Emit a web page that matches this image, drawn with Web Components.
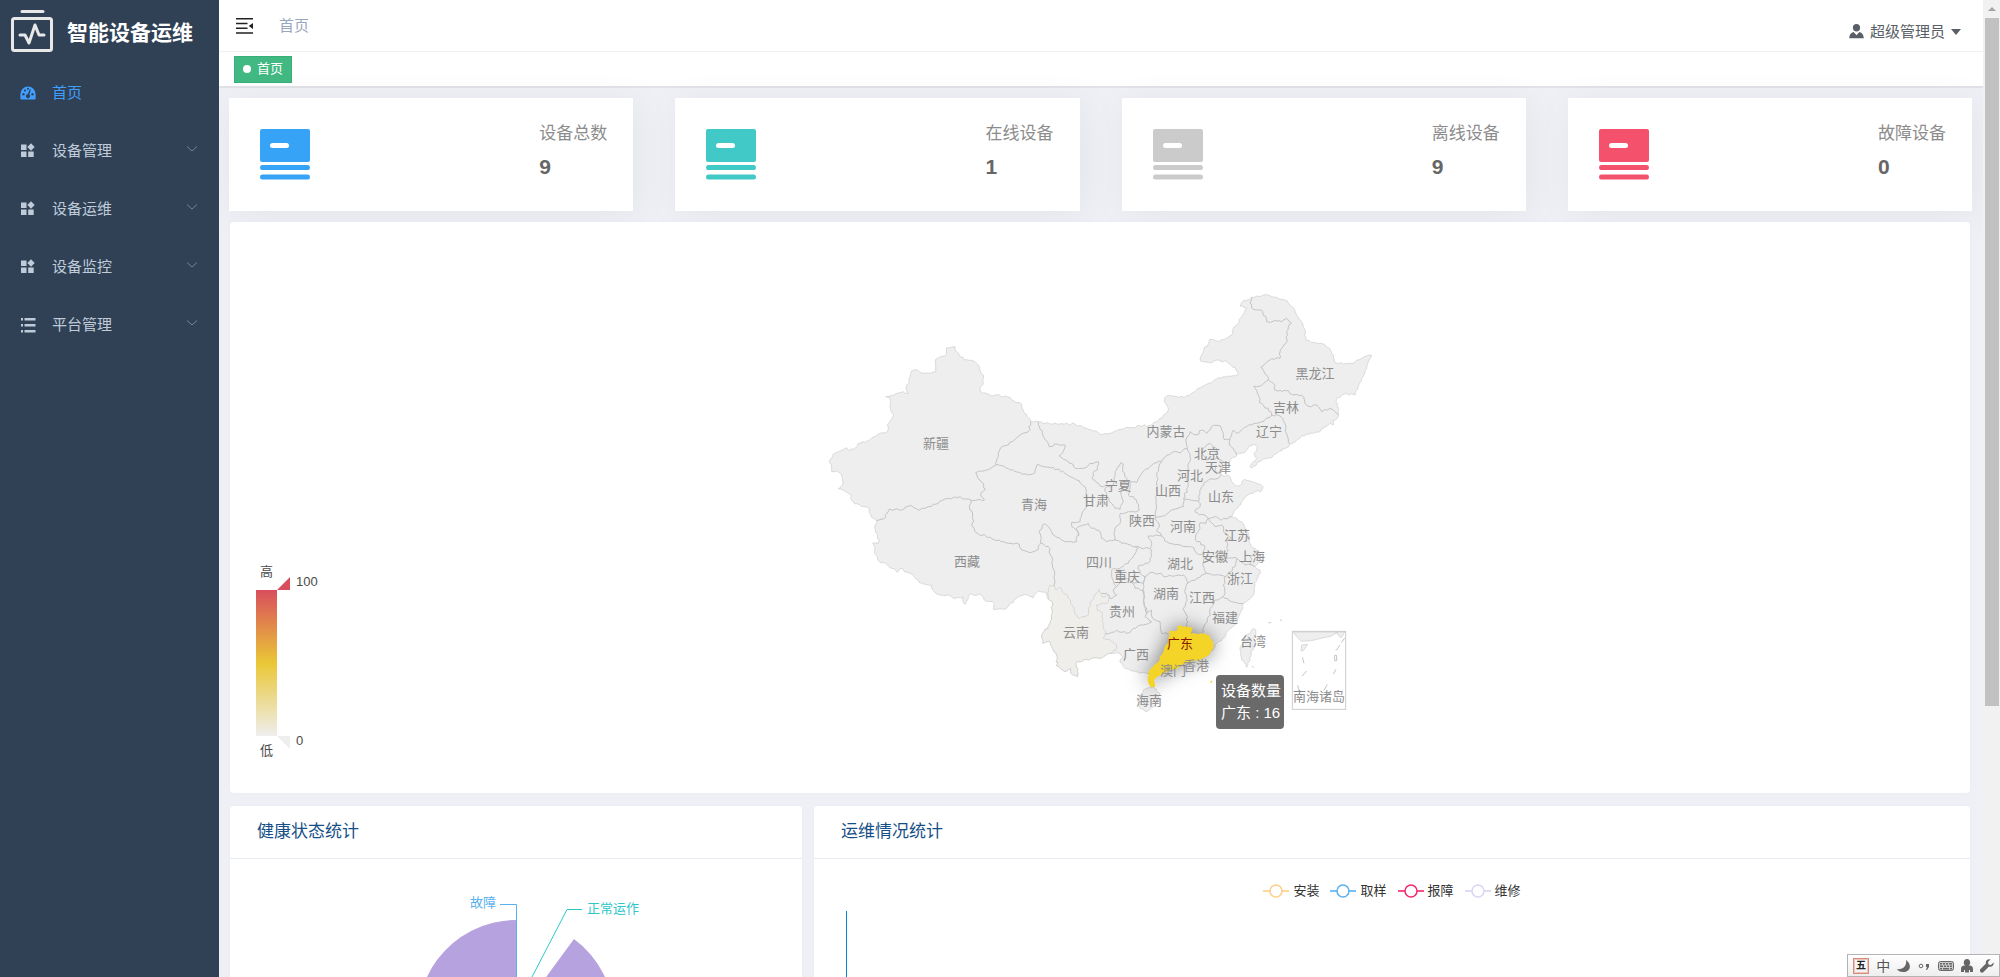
<!DOCTYPE html>
<html lang="zh-CN">
<head>
<meta charset="utf-8">
<title>智能设备运维</title>
<style>
html, body { margin: 0; height: 100%; }
body { font-family: "Liberation Sans", "Noto Sans CJK SC", sans-serif; overflow: hidden; }
</style>
</head>
<body>
<ops-app></ops-app>
<script>
function define(name, html, setup) {
  const tpl = document.createElement('template');
  tpl.innerHTML = html;
  customElements.define(name, class extends HTMLElement {
    connectedCallback() {
      if (this.shadowRoot) return;
      this.attachShadow({ mode: 'open' }).append(tpl.content.cloneNode(true));
      if (setup) setup(this, this.shadowRoot);
    }
  });
}

const ICONS = {
  dash: '<path fill-rule="evenodd" d="M8 1.500a7.600 7.600 0 0 0-7.600 7.600v4.400q0 1 1 1h13.200q1 0 1-1V9.100A7.600 7.600 0 0 0 8 1.500zM3.500 8a1.200 1.200 0 1 1 0 2.400 1.200 1.200 0 0 1 0-2.400zM5 4.400a1.100 1.100 0 1 1 0 2.200 1.100 1.100 0 0 1 0-2.200zM12.500 8a1.200 1.200 0 1 1 0 2.400 1.200 1.200 0 0 1 0-2.400zM8 2.800a1 1 0 1 1 0 2 1 1 0 0 1 0-2zM10.800 4.600L9.300 9.600a2 2 0 1 1-1.600-.400L9.800 4.300z"/>',
  grid: '<path d="M1 1.500h5.500V7H1zM1 8.500h5.500V14H1zM8.200 8.500h5.500V14H8.200zM11 .300l3.700 3.700L11 7.700 7.300 4z"/>',
  list: '<path d="M1 1h2v2.400H1zM4.500 1h11v2.400h-11zM1 7h2v2.400H1zM4.500 7h11v2.400h-11zM1 13h2v2.400H1zM4.500 13h11v2.400h-11z"/>'
};

define('nav-item', `
<style>
:host { display: block; }
a, button { display: flex; align-items: center; box-sizing: border-box; width: 100%; height: 58px; padding: 0 20px; border: 0; background: none; font: inherit; font-size: 15px; line-height: 20px; color: #bfcbd9; text-decoration: none; text-align: left; cursor: pointer; }
a { color: #409eff; }
.icon { width: 16px; height: 16px; margin-right: 16px; fill: currentColor; }
.label { flex: 1; }
.arrow { width: 12px; height: 8px; margin: 0 1px 4px; fill: none; stroke: #76838f; }
</style>`, (host, root) => {
  const open = host.hasAttribute('current') ? 'a' : 'button';
  const el = document.createElement(open);
  if (open === 'a') el.href = '#'; else el.type = 'button';
  el.innerHTML = `<svg class="icon" viewBox="0 0 16 16">${ICONS[host.getAttribute('icon')]}</svg><span class="label"><slot></slot></span>` +
    (open === 'a' ? '' : '<svg class="arrow" viewBox="0 0 12 8"><path d="M1 1.500l5 4.500 5-4.500"/></svg>');
  root.append(el);
});

define('side-bar', `
<style>
:host { display: block; width: 219px; flex: none; background: #304156; }
.brand { display: flex; align-items: center; height: 64px; box-sizing: border-box; padding: 0 11px 2px; gap: 14px; }
.brand svg { width: 42px; height: 42px; flex: none; fill: none; stroke: #e8e8e8; stroke-width: 3; stroke-linecap: round; stroke-linejoin: round; }
h1 { margin: 4px 0 0; font-size: 21px; line-height: 28px; color: #fff; white-space: nowrap; }
</style>
<div class="brand">
  <svg viewBox="0 0 42 42"><path d="M11 1.500h21"/><rect x="1.500" y="8.500" width="39" height="32" rx="2"/><path d="M9 25h5l4 8 6-18 4 10h5"/></svg>
  <h1>智能设备运维</h1>
</div>
<nav>
  <nav-item icon="dash" current>首页</nav-item>
  <nav-item icon="grid">设备管理</nav-item>
  <nav-item icon="grid">设备运维</nav-item>
  <nav-item icon="grid">设备监控</nav-item>
  <nav-item icon="list">平台管理</nav-item>
</nav>`);

define('top-bar', `
<style>
:host { display: block; background: #fff; }
header { display: flex; align-items: center; height: 51px; padding: 0 22px 0 17px; border-bottom: 1px solid #f0f1f3; font-size: 15px; line-height: 20px; }
button { display: flex; align-items: center; border: 0; padding: 0; background: none; font: inherit; cursor: pointer; }
.fold { margin-right: 26px; }
.fold svg { width: 17px; height: 16px; }
a { flex: 1; color: #97a8be; text-decoration: none; }
.user { color: #5a5e66; gap: 6px; margin-top: 12px; }
svg { fill: currentColor; }
.tags { display: flex; height: 34px; align-items: center; padding: 0 15px; border-bottom: 2px solid #e0e2e8; }
.tags a { display: flex; flex: none; align-items: center; gap: 6px; height: 25px; padding: 0 8px; border: 1px solid #35b178; background: #42b983; color: #fff; font-size: 13px; line-height: 18px; }
.tags a::before { content: ""; width: 8px; height: 8px; border-radius: 50%; background: #fff; }
</style>
<header>
  <button class="fold" type="button" aria-label="收起菜单"><svg viewBox="0 0 17 16" style="color:#222"><path d="M0 0h17v1.600H0zM0 4.700h11.500v1.600H0zM0 9.400h11.500V11H0zM0 14.200h17v1.600H0zM17 5v6l-4.300-3z"/></svg></button>
  <a href="#">首页</a>
  <button class="user" type="button">
    <svg width="15" height="15" viewBox="0 0 16 16"><path d="M8 0c2.400 0 3.900 1.700 3.900 3.900S10.200 8 8 8 4.100 6.200 4.100 3.900 5.600 0 8 0zM5 8.600L8 12l3-3.400c3 .9 4.600 2.900 4.800 6.700H.2C.4 11.500 2 9.500 5 8.600z"/></svg>
    <span>超级管理员</span>
    <svg width="10" height="6" viewBox="0 0 10 6"><path d="M0 0h10L5 6z"/></svg>
  </button>
</header>
<div class="tags"><a href="#">首页</a></div>`);

define('stat-card', `
<style>
:host { display: flex; justify-content: space-between; height: 113px; box-sizing: border-box; padding: 24px 26px 0 31px; background: #fff; color: #666; box-shadow: 4px 4px 40px rgba(0,0,0,.05); }
svg { width: 50px; height: 51px; margin-top: 7px; }
dl { margin: 0; }
dt { font-size: 17px; line-height: 24px; color: #8c8c8c; }
dd { margin: 8px 0 0; font-size: 21px; line-height: 26px; font-weight: bold; }
</style>
<svg viewBox="0 0 50 51"><path fill="currentColor" d="M2 0h46q2 0 2 2v29q0 2-2 2H2q-2 0-2-2V2q0-2 2-2zM2 36h46q2 0 2 2.500T48 41H2q-2 0-2-2.500T2 36zM2 45.500h46q2 0 2 2.500t-2 2.500H2q-2 0-2-2.500t2-2.500z"/><rect x="10" y="14" width="19" height="5" rx="2.500" fill="#fff"/></svg>
<dl><dt><slot></slot></dt><dd></dd></dl>`, (host, root) => {
  root.querySelector('svg').style.color = host.getAttribute('color');
  root.querySelector('dd').textContent = host.getAttribute('value');
});

define('panel-card', `
<style>
:host { display: block; background: #fff; border-radius: 4px; box-shadow: 0 0 2px #e6e9f2; overflow: hidden; }
h2 { margin: 0; padding: 0 27px; height: 52px; font-size: 17px; line-height: 52px; font-weight: normal; color: #164f86; border-bottom: 1px solid #e8eaf1; }
</style>
<h2></h2><slot></slot>`, (host, root) => {
  root.querySelector('h2').textContent = host.getAttribute('heading');
});

/* Map geometry: three units to one CSS pixel. */
const OUTLINE = '380,203 405,200 410,215 435,240 465,245 478,260 490,285 490,312 480,330 490,340 525,346 555,348 580,362 605,373 610,392 632,425 655,425 690,432 735,432 765,432 790,443 820,453 850,463 870,460 900,448 950,438 990,436 1015,420 1040,400 1045,390 1033,365 1040,348 1055,347 1075,353 1100,347 1130,330 1150,318 1175,308 1195,293 1225,288 1255,285 1248,270 1220,245 1190,240 1175,248 1152,245 1140,240 1145,225 1170,178 1195,185 1220,175 1240,160 1240,145 1265,110 1280,85 1260,78 1270,62 1295,52 1320,50 1345,45 1370,52 1395,60 1410,75 1422,85 1430,105 1445,125 1455,150 1458,180 1480,187 1505,190 1530,207 1540,225 1545,248 1570,253 1590,250 1615,240 1640,228 1655,226 1645,245 1640,265 1625,295 1615,320 1605,345 1580,340 1552,352 1548,365 1556,385 1556,405 1552,415 1538,422 1540,435 1530,430 1515,440 1500,455 1480,460 1465,463 1445,467 1425,485 1410,492 1395,505 1370,520 1340,535 1315,545 1295,565 1290,560 1300,545 1310,535 1302,520 1312,500 1302,493 1288,497 1280,510 1265,520 1250,525 1238,532 1225,550 1205,558 1200,575 1205,585 1230,590 1235,605 1250,618 1265,612 1270,600 1290,603 1315,612 1327,618 1325,632 1305,635 1285,645 1270,660 1255,680 1240,700 1235,710 1250,715 1265,725 1275,745 1285,765 1290,790 1310,812 1320,825 1318,845 1305,860 1320,870 1315,885 1308,905 1303,925 1300,945 1285,960 1270,970 1265,990 1255,1010 1245,1035 1225,1050 1215,1070 1195,1085 1183,1105 1160,1125 1110,1140 1065,1165 1010,1185 990,1178 960,1180 930,1170 910,1160 900,1140 908,1130 890,1118 870,1120 840,1135 815,1135 790,1140 770,1145 772,1190 758,1185 752,1165 735,1175 710,1158 712,1130 695,1100 690,1085 668,1090 665,1070 690,1030 697,1000 697,965 685,958 680,940 655,933 640,953 615,943 590,955 570,970 560,985 520,988 518,965 500,965 485,945 455,942 445,950 437,973 430,968 430,950 400,955 385,945 360,945 335,925 335,915 305,910 270,880 240,865 232,877 215,865 190,848 172,838 165,820 165,805 158,790 175,790 178,780 165,755 165,735 170,722 155,712 148,685 105,672 95,660 95,645 70,630 55,627 68,615 62,580 50,572 35,575 35,555 28,545 40,522 80,503 88,512 100,508 115,490 135,487 165,470 203,452 205,430 220,408 210,380 208,353 197,350 250,335 265,340 258,325 270,290 280,270 300,277 330,280 348,275 347,238 362,230 380,222 380,203';
const YUNNAN = '697,965 685,958 683,940 690,915 702,918 708,930 720,922 745,955 770,1005 780,1015 805,1005 810,970 822,950 838,928 845,950 865,945 865,965 830,975 832,990 848,1000 850,1030 857,1060 850,1075 875,1085 890,1095 888,1110 870,1120 840,1135 815,1135 790,1140 770,1145 772,1190 758,1185 752,1165 735,1175 710,1158 712,1130 695,1100 690,1085 668,1090 665,1070 690,1030 697,1000 697,965';
const GUANGDONG = '1072,1038 1118,1043 1112,1062 1145,1060 1170,1068 1180,1090 1178,1108 1168,1124 1145,1137 1115,1144 1092,1150 1068,1168 1045,1171 1028,1180 1014,1187 1002,1200 1006,1220 991,1221 983,1195 986,1176 1010,1150 1030,1115 1045,1080 1048,1052 1070,1052 1072,1038';
const ISLANDS = [
  '970,1230 1000,1222 1020,1240 1015,1265 980,1295 960,1285 955,1255 970,1230',
  '1300,1045 1308,1055 1300,1100 1280,1162 1265,1140 1260,1110 1275,1070 1300,1045'
];
const BORDERS = [
  '632,425 625,455 600,465 565,495 542,503 535,530 527,555',
  '527,555 500,570 467,578 480,600 497,628 482,640 493,660 452,660',
  '452,660 420,650 375,657 355,670 325,680 300,690 265,678 245,690 208,687 190,718 170,722',
  '452,660 450,690 458,705 457,740 475,762 515,775 550,785 598,793 605,810 630,818 655,808 662,788',
  '527,555 548,557 570,570 600,577 625,585 645,578 652,553 670,560 700,562 735,580 770,600 795,620 800,650 800,680 785,705 780,725 755,727 755,740 775,755 770,785 745,785',
  '662,788 660,750 672,732 685,740 700,765 725,780 745,785',
  '775,765 770,745 790,735 805,730 815,745 838,752 845,775 860,785 885,780 900,785 945,800 990,807',
  '655,425 670,470 687,500 710,492 735,495 730,515 717,528 745,545 765,565 790,565 810,550 835,545 832,570 818,580 820,600 850,620 860,615',
  '662,788 685,800 695,830 702,870 702,918',
  '902,548 910,552 908,575 920,595 930,605 905,605 902,640 910,665 900,688 885,685 875,670 860,650 855,625 880,615 885,575 902,548',
  '930,605 950,608 965,580 990,560 1005,548 1025,545 1030,535 1055,518 1085,515 1102,505 1098,478 1110,455 1125,465 1148,450 1160,460 1175,440 1200,437 1210,460 1212,478 1230,478 1240,450 1252,460 1280,440 1310,430 1330,425 1355,405 1380,408',
  '1230,478 1228,495 1240,505 1250,525',
  '1355,405 1345,385 1318,368 1312,340 1302,318 1320,318 1345,300 1340,285 1322,262 1350,240 1380,235 1380,215 1398,190 1400,155 1415,130 1400,115 1385,125 1340,125 1328,95 1300,88 1290,70 1295,52',
  '1345,300 1360,310 1365,330 1385,335 1405,332 1420,345 1445,345 1455,370 1475,380 1490,375 1505,395 1530,385 1556,405',
  '1380,408 1395,430 1400,460 1410,492',
  '1025,545 1010,580 1012,620 1008,670 1005,715',
  '1102,505 1110,530 1105,570 1100,600 1105,620 1090,655',
  '1090,655 1090,680 1055,690 1040,703 1005,715',
  '1090,655 1135,665',
  '1135,665 1140,640 1145,620 1165,600 1195,595 1205,585',
  '1135,665 1140,680 1125,695 1165,715',
  '1165,715 1185,710 1205,720 1235,710',
  '1165,715 1158,730 1140,728 1140,745 1127,765 1130,785 1152,795 1150,825',
  '1005,715 1018,735 1010,750 1025,768 1040,785 1080,795 1115,800 1130,820 1150,825',
  '1165,715 1185,740 1205,735 1210,755 1235,775 1220,785 1225,810 1218,835 1250,835',
  '1250,835 1270,850 1295,855 1305,860', '1295,855 1290,830 1310,812',
  '1250,835 1245,860 1225,880 1215,890',
  '1150,825 1148,855 1160,880 1185,885 1215,890',
  '1215,890 1210,915 1215,940 1210,950', '1210,950 1235,965 1270,970',
  '1210,950 1185,960 1175,980 1165,1010 1152,1040 1145,1060',
  '1160,880 1130,895 1102,910',
  '975,890 990,878 1020,880 1040,890 1075,885 1095,890 1102,910',
  '1102,910 1095,930 1102,960 1090,985 1102,1010 1100,1040',
  '1025,768 985,768 995,790 990,805 995,830 985,850 955,858 960,880 975,890',
  '975,890 970,910 935,905 915,895 890,920 875,890 875,870 900,865 925,850 940,830 955,805 945,800',
  '890,920 880,930 890,945 870,955 860,940 845,940',
  '935,905 945,925 970,930 970,960 980,1000 975,1010 995,1025 970,1035 940,1045 920,1060 890,1050 870,1060 855,1062',
  '975,890 970,940 980,1000 995,990 998,1015 1020,1025 1025,1060 1045,1062',
  '930,605 925,645 950,660 958,690 940,695 902,700 900,730 885,745 885,780',
  '1150,505 1170,490 1190,505 1190,535 1160,540 1145,520 1150,505',
  '1190,535 1210,545 1205,575 1190,580 1188,555'
];
const LABELS = [['新疆',936,443],['青海',1034,504],['甘肃',1096,500],['西藏',967,561],['四川',1099,562],['云南',1076,632],
  ['黑龙江',1315,373],['吉林',1286,407],['辽宁',1269,431],['内蒙古',1166,431],['北京',1207,453],['天津',1218,467],['河北',1190,475],
  ['宁夏',1118,485],['山西',1168,490],['山东',1221,496],['陕西',1142,520],['河南',1183,526],['江苏',1237,535],['安徽',1215,556],
  ['上海',1252,556],['湖北',1180,563],['重庆',1127,576],['浙江',1240,578],['湖南',1166,593],['江西',1202,597],['贵州',1122,611],
  ['福建',1225,617],['台湾',1253,641],['广西',1136,654],['香港',1196,665],['澳门',1173,670],['海南',1149,700],['南海诸岛',1319,696],['广东',1180,643,'hot']];

/* Splits each edge into short steps with a repeatable wobble, so shared borders coincide. */
function coast(points) {
  const p = points.split(' ').map(s => s.split(',').map(Number));
  const wob = (a, b) => { const s = Math.sin(a * 12.9898 + b * 78.233) * 43758.5453; return (s - Math.floor(s) - .5) * 7; };
  const out = [p[0]];
  for (let i = 1; i < p.length; i++) {
    const [x0, y0] = p[i - 1], [x1, y1] = p[i];
    const n = Math.max(1, Math.round(Math.hypot(x1 - x0, y1 - y0) / 8));
    for (let k = 1; k < n; k++) {
      const x = Math.round(x0 + (x1 - x0) * k / n), y = Math.round(y0 + (y1 - y0) * k / n);
      out.push([Math.round(x + wob(x, y)), Math.round(y + wob(y, x))]);
    }
    out.push([x1, y1]);
  }
  return 'M' + out.map(q => q.join(' ')).join('L');
}

define('china-map', `
<style>
:host { display: block; position: relative; width: 600px; height: 450px; }
svg { display: block; overflow: visible; }
.land { fill: #eee; stroke: #ccc; stroke-width: 2; stroke-linejoin: round; }
.line { fill: none; stroke: #c4c4c4; stroke-width: 3; stroke-linejoin: round; }
.yn { fill: #efeeea; stroke: #ccc; stroke-width: 2; }
.gd { fill: #f4d427; filter: drop-shadow(0 0 28px rgba(0,0,0,.5)); }
text { font-size: 13px; fill: #8c8c8c; text-anchor: middle; dominant-baseline: central; }
.hot { fill: #8b1a00; }
.tip { position: absolute; left: 416px; top: 395px; padding: 5px 5px; border-radius: 4px; background: rgba(80,80,80,.85); color: #fff; font-size: 15px; line-height: 22px; white-space: nowrap; width: 58px; }
</style>
<svg width="600" height="450" viewBox="800 280 600 450"></svg>
<div class="tip" role="tooltip">设备数量<br>广东 : 16</div>`, (host, root) => {
  const line = (cls, d) => `<path class="${cls}" d="${coast(d)}"/>`;
  root.querySelector('svg').innerHTML =
    '<svg x="820" y="280" width="600" height="450" viewBox="0 0 1800 1350">' +
    line('land', OUTLINE) + ISLANDS.map(d => line('land', d)).join('') + line('yn', YUNNAN) +
    BORDERS.map(d => line('line', d)).join('') + line('gd', GUANGDONG) +
    '<rect x="1417" y="1054" width="160" height="234" fill="none" stroke="#ccc" stroke-width="3"/>' +
    '<path class="land" d="M1419 1056h135l-20 12-40 9-20 5-30 2-12-12zM1547 1056h28l-12 18zM1445 1095l18-2-12 18-8 2z"/>' +
    '<path class="line" d="M1447 1132l5 18M1446 1188l14-15M1433 1216l5 18M1574 1074l-10 14M1560 1095l-12 17M1544 1126h6v16h-6zM1540 1182l8-14M1512 1231l10-18M1346 1029l7-2M1380 1019l5 3M1297 1158l3 4"/>' +
    '<circle cx="1174" cy="1205" r="3" fill="#f4d427"/></svg>' +
    LABELS.map(([t, x, y, c]) => `<text x="${x}" y="${y}"${c ? ` class="${c}"` : ''}>${t}</text>`).join('');
});

define('heat-legend', `
<style>
:host { display: grid; grid-template-columns: 21px 13px auto; column-gap: 0; width: 70px; font-size: 13px; color: #4a4a4a; line-height: 18px; }
.cap { grid-column: 1 / -1; padding-left: 4px; }
.bar { width: 21px; height: 146px; background: linear-gradient(#d94e5d, #eac736 50%, #eee); }
.hi, .lo { width: 13px; height: 13px; }
.hi { background: #d94e5d; clip-path: polygon(100% 0, 100% 100%, 0 100%); }
.lo { background: #eee; clip-path: polygon(0 0, 100% 0, 100% 100%); }
.marks { display: flex; flex-direction: column; justify-content: space-between; margin: -13px 0; }
.nums { display: flex; flex-direction: column; justify-content: space-between; margin: -17px 0 -14px 6px; }
.top { margin-bottom: 9px; } .bottom { margin-top: 6px; }
</style>
<span class="cap top">高</span>
<div class="bar"></div><div class="marks"><i class="hi"></i><i class="lo"></i></div>
<div class="nums"><span>100</span><span>0</span></div>
<span class="cap bottom">低</span>`);

define('map-card', `
<style>
:host { display: grid; grid-template-columns: 1fr 600px 1fr; height: 571px; background: #fff; border-radius: 4px; box-shadow: 0 0 2px #e6e9f2; }
heat-legend { align-self: end; margin: 0 0 33px 26px; }
china-map { margin-top: 58px; }
</style>
<heat-legend></heat-legend><china-map></china-map>`);

define('health-pie', `
<style>
:host { display: flex; justify-content: center; height: 320px; }
text { font-size: 13px; dominant-baseline: central; }
</style>
<svg width="400" height="320" viewBox="0 0 400 320">
  <path fill="#b6a2de" d="M200 159V61A98 98 0 1 0 258 80Z"/>
  <path fill="none" stroke="#5ab1ef" d="M184 45.500h16.500V159"/>
  <path fill="none" stroke="#2ec7c9" d="M266 50.500h-15L216 118 200 159"/>
  <text x="154" y="43" fill="#5ab1ef">故障</text>
  <text x="271" y="49" fill="#2ec7c9">正常运作</text>
</svg>`);

define('ops-chart', `
<style>
:host { display: block; height: 320px; }
ul { display: flex; justify-content: center; gap: 11px; margin: 0; padding: 23px 0 0; list-style: none; font-size: 13px; line-height: 18px; color: #333; }
li { display: flex; align-items: center; gap: 4px; }
svg { width: 26px; height: 14px; fill: #fff; stroke: currentColor; }
.plot { margin: 11px 32px 0; height: 250px; border-left: 1px solid #008acd; }
</style>
<ul></ul><div class="plot"></div>`, (host, root) => {
  root.querySelector('ul').innerHTML = [['安装', '#ffce88'], ['取样', '#5ab1ef'], ['报障', '#f5276b'], ['维修', '#d8d5f5']]
    .map(([t, c]) => `<li><svg viewBox="0 0 26 14" style="color:${c}"><path stroke-width="2" opacity=".8" d="M0 7h26"/><circle cx="13" cy="7" r="6" stroke-width="1.500"/></svg>${t}</li>`).join('');
});

define('scroll-rail', `
<style>
:host { display: flex; flex-direction: column; align-items: center; width: 17px; flex: none; background: #f1f1f1; }
svg { width: 8px; height: 4px; margin: 7px 0; fill: #a3a3a3; flex: none; }
.thumb { width: 14px; height: 70.400%; background: #c1c1c1; }
</style>
<svg viewBox="0 0 8 4"><path d="M4 0l4 4H0z"/></svg><div class="thumb"></div>`);

define('ime-bar', `
<style>
:host { position: fixed; right: 0; bottom: 0; display: flex; align-items: center; justify-content: space-between; box-sizing: border-box; width: 153px; height: 23px; padding: 0 5px; border: 1px solid #b4b4b4; background: linear-gradient(#fff, #eee); color: #555; font-size: 14px; line-height: 16px; }
.wb { width: 12px; height: 12px; padding: 1px; border: 1px solid #d98b7b; outline: 1px solid #f0c4b8; outline-offset: -2px; font-size: 10px; line-height: 12px; text-align: center; font-weight: bold; color: #222; }
svg { fill: #666; }
</style>
<span class="wb">五</span><span>中</span>
<svg width="14" height="14" viewBox="0 0 14 14"><path d="M9 1c6 4 5 12-3 12-3 0-5-1-6-3 6 1 10-3 9-9z"/></svg>
<svg width="12" height="10" viewBox="0 0 12 10"><circle cx="3" cy="5" r="1.800" fill="none" stroke="#666"/><path d="M8 3h3v3L9 9H8l1-3H8z"/></svg>
<svg width="16" height="12" viewBox="0 0 16 12"><rect x=".5" y="1.500" width="15" height="9" rx="2" fill="#ccc" stroke="#666"/><path d="M2 3h2v1.500H2zM5 3h2v1.500H5zM8 3h2v1.500H8zM11 3h3v1.500h-3zM2 5.500h3V7H2zM6 5.500h2V7H6zM9 5.500h2V7H9zM12 5.500h2V7h-2zM2 8h2v1.500H2zM5 8h6v1.500H5zM12 8h2v1.500h-2z"/></svg>
<svg width="12" height="14" viewBox="0 0 12 14"><path d="M6 0c4 0 4 6 1.500 6.500Q12 6 12 10v3H9v-2H8v2.500H4V11H3v2H0v-3q0-4 4.500-3.500C2 6 2 0 6 0z"/></svg>
<svg width="14" height="14" viewBox="0 0 14 14"><path d="M13.500 3.500c.8 3-1.800 5-4.500 4L3.500 13q-1.500 1.500-3 0t0-3L6 4.500C5 2 7.500-.5 10.500.500L8 3l.5 2.500L11 6z"/></svg>`);

define('ops-app', `
<style>
:host { display: flex; height: 100vh; background: #eff0f5; }
main { flex: 1; min-width: 0; overflow: hidden; }
.stats { display: grid; grid-template-columns: repeat(4, 1fr); gap: 42px; padding: 10px 11px 11px 10px; }
.body { display: flex; flex-direction: column; gap: 13px; padding: 0 13px 13px 11px; position: relative; }
.pair { display: grid; grid-template-columns: 143fr 289fr; gap: 12px; }
</style>
<side-bar></side-bar>
<main>
  <top-bar></top-bar>
  <div class="stats">
    <stat-card color="#36a3f7" value="9">设备总数</stat-card>
    <stat-card color="#40c9c6" value="1">在线设备</stat-card>
    <stat-card color="#cbcbcb" value="9">离线设备</stat-card>
    <stat-card color="#f4516c" value="0">故障设备</stat-card>
  </div>
  <div class="body">
    <map-card></map-card>
    <div class="pair">
      <panel-card heading="健康状态统计"><health-pie></health-pie></panel-card>
      <panel-card heading="运维情况统计"><ops-chart></ops-chart></panel-card>
    </div>
  </div>
</main>
<scroll-rail></scroll-rail>
<ime-bar></ime-bar>`);
</script>
</body>
</html>
